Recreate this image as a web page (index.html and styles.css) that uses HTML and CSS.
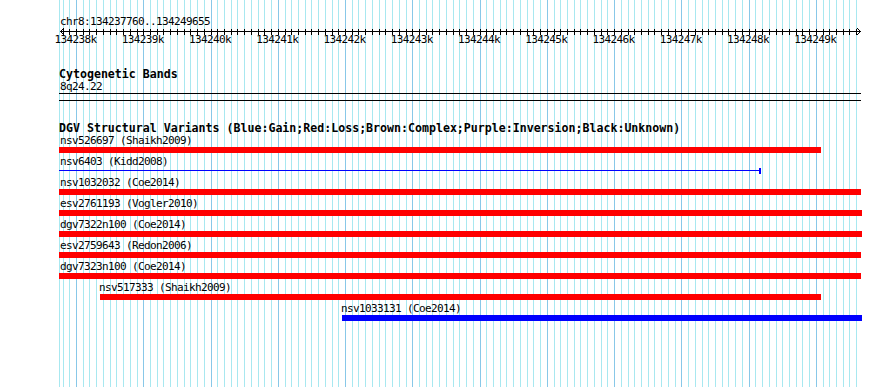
FILE: index.html
```html
<!DOCTYPE html>
<html lang="en">
<head>
<meta charset="utf-8">
<title>chr8:134237760..134249655</title>
<link rel="stylesheet" href="styles.css">
</head>
<body>
<div class="page">
  <div class="overview">
    <div class="locus">chr8:134237760..134249655</div>
    <div class="ruler">
      <svg class="arrow" width="4" height="7" viewBox="0 0 4 7" shape-rendering="crispEdges"><path d="M0 3h1v1H0zM1 2h1v1H1zM1 4h1v1H1zM2 1h1v1H2zM2 5h1v1H2zM3 0h1v1H3zM3 6h1v1H3z"/></svg>
      <svg class="arrow" width="4" height="7" viewBox="0 0 4 7" shape-rendering="crispEdges"><path d="M3 3h1v1H3zM2 2h1v1H2zM2 4h1v1H2zM1 1h1v1H1zM1 5h1v1H1zM0 0h1v1H0zM0 6h1v1H0z"/></svg>
    </div>
    <div class="ticks">
      <span>134238k</span><span>134239k</span><span>134240k</span><span>134241k</span><span>134242k</span><span>134243k</span><span>134244k</span><span>134245k</span><span>134246k</span><span>134247k</span><span>134248k</span><span>134249k</span>
    </div>
  </div>

  <section class="track track-bands">
    <h2 class="track-title">Cytogenetic Bands</h2>
    <div class="band-label">8q24.22</div>
    <div class="band"></div>
  </section>

  <section class="track track-dgv">
    <h2 class="track-title">DGV Structural Variants (Blue:Gain;Red:Loss;Brown:Complex;Purple:Inversion;Black:Unknown)</h2>
    <div class="feature" style="--x:0px;--w:762px;--lx:1px"><div class="label">nsv526697 (Shaikh2009)</div><div class="bar loss"></div></div>
    <div class="feature" style="--x:0px;--w:702px;--lx:1px"><div class="label">nsv6403 (Kidd2008)</div><div class="bar gain thin"></div></div>
    <div class="feature" style="--x:0px;--w:802px;--lx:1px"><div class="label">nsv1032032 (Coe2014)</div><div class="bar loss"></div></div>
    <div class="feature" style="--x:0px;--w:803px;--lx:1px"><div class="label">esv2761193 (Vogler2010)</div><div class="bar loss"></div></div>
    <div class="feature" style="--x:0px;--w:803px;--lx:1px"><div class="label">dgv7322n100 (Coe2014)</div><div class="bar loss"></div></div>
    <div class="feature" style="--x:0px;--w:802px;--lx:1px"><div class="label">esv2759643 (Redon2006)</div><div class="bar loss"></div></div>
    <div class="feature" style="--x:0px;--w:802px;--lx:1px"><div class="label">dgv7323n100 (Coe2014)</div><div class="bar loss"></div></div>
    <div class="feature" style="--x:41px;--w:721px;--lx:40px"><div class="label">nsv517333 (Shaikh2009)</div><div class="bar loss"></div></div>
    <div class="feature" style="--x:283px;--w:520px;--lx:282px"><div class="label">nsv1033131 (Coe2014)</div><div class="bar gain"></div></div>
  </section>
</div>
</body>
</html>
```

FILE: styles.css
```css
html, body {
  margin: 0;
  padding: 0;
  background: #ffffff;
}

.page {
  width: 890px;
  height: 387px;
  overflow: hidden;
  color: #000000;
  font: 11px/12px "DejaVu Sans Mono", monospace;
  letter-spacing: -0.62px;
  background-color: #ffffff;
  background-image:
    repeating-linear-gradient(to right, #88c8e8 17px, #88c8e8 18px, transparent 18px, transparent 84.26px),
    repeating-linear-gradient(to right, #a8e8f0 3.548px, #a8e8f0 4.548px, transparent 4.548px, transparent 10.274px),
    linear-gradient(to right, #a8e8f0 0, #a8e8f0 1px, transparent 1px);
  background-position: 59px 0;
  background-size: 799px 100%;
  background-repeat: no-repeat;
}

.locus {
  margin: 16px 0 0 60px;
  white-space: nowrap;
}

.ruler {
  margin-left: 60px;
  width: 801px;
  height: 7px;
  display: flex;
  justify-content: space-between;
  background-image:
    linear-gradient(#000000, #000000),
    repeating-linear-gradient(to right, #000000 2.548px, #000000 3.548px, transparent 3.548px, transparent 9.274px);
  background-position: 0 3px, 0 1px;
  background-size: 100% 1px, 100% 6px;
  background-repeat: no-repeat;
}

.arrow {
  display: block;
  fill: #000000;
}

.ticks {
  display: flex;
  margin-top: -1px;
  padding-left: 42px;
  white-space: nowrap;
}

.ticks span {
  flex: 0 0 67.26px;
  text-align: center;
}

.track-title {
  margin: 0 0 0 59px;
  font: bold 11.6px/13px "DejaVu Sans Mono", monospace;
  letter-spacing: 0;
  white-space: nowrap;
}

.track-bands .track-title {
  margin-top: 21.5px;
}

.band-label {
  margin-left: 60px;
}

.band {
  margin: 0.5px 0 0 59px;
  width: 802px;
  height: 6px;
  border-top: 1px solid #000000;
  border-bottom: 1px solid #000000;
}

.track-dgv .track-title {
  margin-top: 20.5px;
  margin-bottom: 0.5px;
}

.feature {
  margin: 0 0 3px 59px;
}

.label {
  padding-left: var(--lx);
  white-space: nowrap;
}

.bar {
  margin-left: var(--x);
  width: var(--w);
  height: 6px;
  box-sizing: border-box;
}

.bar.loss {
  background: #ff0000;
}

.bar.gain {
  background: #0000ff;
}

.bar.gain.thin {
  background: linear-gradient(#0000ff, #0000ff) 0 2px / 100% 1px no-repeat;
  border-right: 2px solid #0000ff;
}
```
